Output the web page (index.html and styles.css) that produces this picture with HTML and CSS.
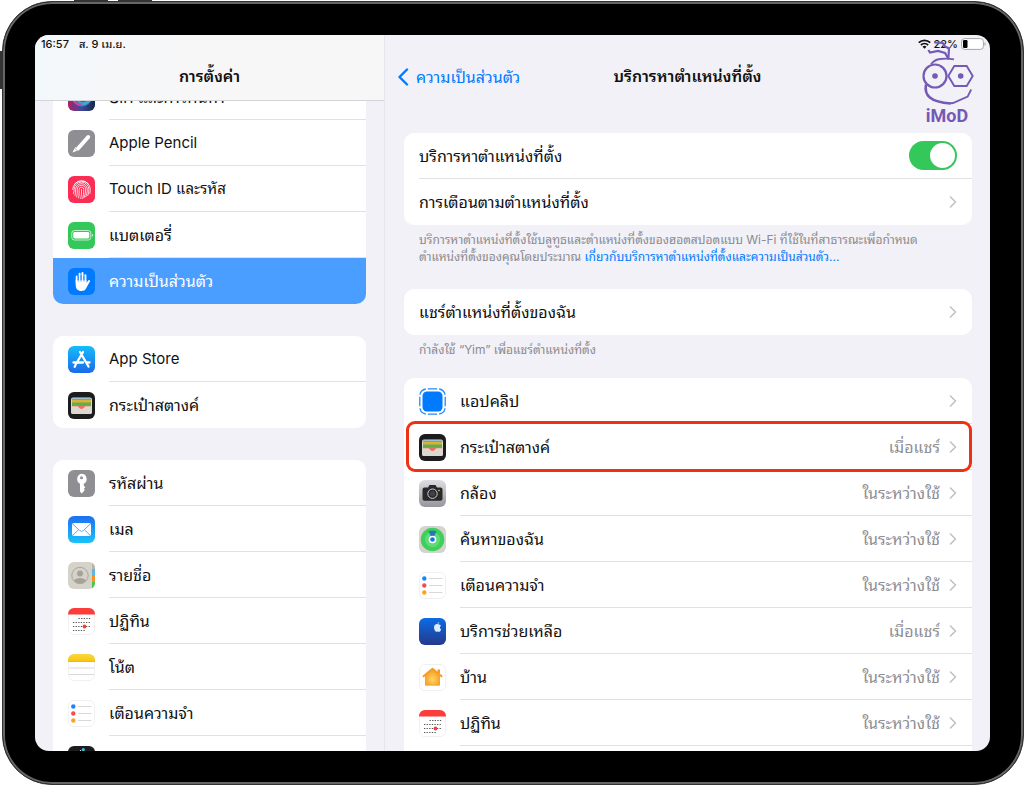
FILE: index.html
```html
<!DOCTYPE html>
<html lang="th">
<head>
  <meta charset="UTF-8" />
  <meta name="viewport" content="width=device-width, initial-scale=1" />
  <title>บริการหาตำแหน่งที่ตั้ง</title>
  <link rel="stylesheet" href="styles.css">
</head>
<body>

  <!-- shared icons -->
  <svg class="sprite" aria-hidden="true">
    <defs>
      <linearGradient id="g-store" x1="0" y1="0" x2="0" y2="1"><stop offset="0" stop-color="#15bdfb"/><stop offset="1" stop-color="#1c69ea"/></linearGradient>
      <linearGradient id="g-mail" x1="0" y1="0" x2="0" y2="1"><stop offset="0" stop-color="#1d6ff2"/><stop offset="1" stop-color="#19c3fb"/></linearGradient>
      <linearGradient id="g-notes" x1="0" y1="0" x2="0" y2="1"><stop offset="0" stop-color="#fbd743"/><stop offset="1" stop-color="#f9c60d"/></linearGradient>
      <linearGradient id="g-camera" x1="0" y1="0" x2="0" y2="1"><stop offset="0" stop-color="#dedee2"/><stop offset="1" stop-color="#95959b"/></linearGradient>
      <linearGradient id="g-support" x1="0" y1="0" x2="0" y2="1"><stop offset="0" stop-color="#0b6be6"/><stop offset="1" stop-color="#26398a"/></linearGradient>
      <radialGradient id="g-home" cx=".5" cy=".6" r=".6"><stop offset="0" stop-color="#ffd766"/><stop offset="1" stop-color="#f7981d"/></radialGradient>
      <linearGradient id="g-siri" x1="0" y1="0" x2="1" y2="0"><stop offset="0" stop-color="#b01f66"/><stop offset=".5" stop-color="#3e4a9c"/><stop offset="1" stop-color="#12284e"/></linearGradient>
      <clipPath id="tile"><rect width="27" height="27" rx="6"/></clipPath>
    </defs>

    <symbol id="siri" viewBox="0 0 27 27">
      <rect width="27" height="27" rx="6" fill="url(#g-siri)"/>
      <circle cx="14" cy="13" r="10" fill="#3565b0"/>
      <path d="M5 16c5 6 13 7 18-1M7 12c4 9 10 9 16 2" fill="none" stroke="#4aa5cc" stroke-width="1.600"/>
      <path d="M5 15c2 5 5 6 9 6" fill="none" stroke="#c9489a" stroke-width="2"/>
    </symbol>
    <symbol id="pencil" viewBox="0 0 27 27">
      <rect width="27" height="27" rx="6" fill="#8e8e93"/>
      <path d="M20.2 7 10 18.5" stroke="#fff" stroke-width="4" stroke-linecap="round"/>
      <path d="M7.300 17 4.500 22.500 11 20z" fill="#fff"/>
      <path d="m7 18.500 2.500 2.200" stroke="#8e8e93" stroke-width=".7"/>
    </symbol>
    <symbol id="touch" viewBox="0 0 27 27">
      <rect width="27" height="27" rx="6" fill="#fb2d55"/>
      <g fill="none" stroke="#fff" stroke-width=".8" stroke-linecap="round">
        <path d="M7 7.500a9.500 9.500 0 0 1 13 0M4.700 13.500a8.800 8.800 0 0 1 17.600 0c0 1.500-.2 2.800-.5 4M5.500 17.500c.4-1.300.6-2.500.6-4a7.400 7.400 0 0 1 14.800 0c0 2.300-.5 4.200-1.100 6M7 19.500c.5-1.800.7-3.800.7-6a5.800 5.800 0 0 1 11.600 0c0 3-.7 5.300-1.500 7.300M8.700 21c.5-2 .7-5 .7-7.500a4.100 4.100 0 0 1 8.200 0c0 3.500-.7 6-1.500 8M10.700 22c.4-2.300.5-5.500.5-8.500a2.300 2.300 0 0 1 4.600 0c0 3.800-.5 6.500-1.100 9M13.500 13.500c0 3.500-.1 6.500-.7 9"/>
      </g>
    </symbol>
    <symbol id="battery" viewBox="0 0 27 27">
      <rect width="27" height="27" rx="6" fill="#34c759"/>
      <rect x="3.800" y="8.500" width="19" height="9.500" rx="2.600" fill="none" stroke="#d0f2d8" stroke-width=".9"/>
      <rect x="5.300" y="10" width="16" height="6.500" rx="1.400" fill="#fff"/>
      <path d="M24 11.800v3q1-.3 1-1.500t-1-1.500z" fill="#d0f2d8"/>
    </symbol>
    <symbol id="hand" viewBox="0 0 27 27">
      <rect width="27" height="27" rx="6" fill="#007aff"/>
      <g stroke="#fff" stroke-width="2" stroke-linecap="round" fill="none"><path d="M8.700 15V8.500M11.600 14V5.800M14.500 14V5M17.400 15V7.300M17.500 18l3.500-5"/></g>
      <path d="M7.700 12h10.700v4l2.800-3.500.7.800-3.300 6.200c-1 2.400-2.500 3.500-5.200 3.500-3.700 0-5.700-2.300-5.700-6z" fill="#fff"/>
      <path d="M10.150 8v5.500M13.050 7v6.500M15.950 8v5.500" stroke="#007aff" stroke-width=".7"/>
    </symbol>
    <symbol id="store" viewBox="0 0 27 27">
      <rect width="27" height="27" rx="6" fill="url(#g-store)"/>
      <g stroke="#fff" stroke-width="2.300" stroke-linecap="round" fill="none"><path d="M15 6 8 18M12 6l8.500 14.500M5.500 16.500h9.500M18.500 16.500h3M7.300 19.500l-.6 1.200"/></g>
    </symbol>
    <symbol id="wallet" viewBox="0 0 27 27">
      <rect width="27" height="27" rx="6" fill="#1c1c1e"/>
      <rect x="3" y="5.500" width="21" height="16.500" rx="2" fill="#dcd8d0"/>
      <path d="M4 6.500h19v1.800H4z" fill="#63a6cd"/><path d="M4 8h19v3H4z" fill="#d9b13d"/><path d="M4 10.500h19v3.500H4z" fill="#63ae4b"/>
      <path d="M4 13.500h19v4H4z" fill="#ef6f61"/>
      <path d="M3 14.300h6c1.800 0 1.800 2.700 4.500 2.700s2.700-2.700 4.500-2.700h6V20a2 2 0 0 1-2 2H5a2 2 0 0 1-2-2z" fill="#dcd8d0"/>
    </symbol>
    <symbol id="key" viewBox="0 0 27 27">
      <rect width="27" height="27" rx="6" fill="#8e8e93"/>
      <path fill-rule="evenodd" d="M13.500 3.800a5.300 5.300 0 0 1 2.300 10v2l1.500 1.500-1.500 1.500 1 1.200-3 3.500-1.800-1.800v-8A5.300 5.300 0 0 1 13.500 3.800zm0 2.500a1.500 1.500 0 1 0 0 3 1.500 1.500 0 0 0 0-3z" fill="#fff"/>
    </symbol>
    <symbol id="mail" viewBox="0 0 27 27">
      <rect width="27" height="27" rx="6" fill="url(#g-mail)"/>
      <rect x="4" y="7" width="19" height="13" rx="2" fill="#fff"/>
      <path d="m4.500 7.800 7.200 6.800q1.800 1.500 3.600 0l7.200-6.800M4.700 19.400l6-5.700M22.300 19.400l-6-5.700" fill="none" stroke="#4aa3f2" stroke-width=".9"/>
    </symbol>
    <symbol id="contacts" viewBox="0 0 27 27">
      <g clip-path="url(#tile)">
        <path d="M0 0h27v27H0z" fill="#d5d2c9"/>
        <path d="M24 0h3v7h-3z" fill="#b9b6ad"/><path d="M24 7h3v7h-3z" fill="#5bb7e8"/><path d="M24 14h3v6h-3z" fill="#f79426"/><path d="M24 20h3v7h-3z" fill="#4cc24f"/>
        <circle cx="12" cy="13.500" r="8.200" fill="#d5d2c9" stroke="#a4a29b" stroke-width=".9"/>
        <circle cx="12" cy="11.500" r="3" fill="#a4a29b"/>
        <path d="M6 18.700c1.500-3.500 10.500-3.500 12 0-3 3.500-9 3.500-12 0z" fill="#a4a29b"/>
      </g>
    </symbol>
    <symbol id="calendar" viewBox="0 0 27 27">
      <rect x=".5" y=".5" width="26" height="26" rx="5.500" fill="#fff" stroke="#f0f0f2"/>
      <path d="M0 6.500V6a6 6 0 0 1 6-6h15a6 6 0 0 1 6 6v.5z" fill="#fc3d39"/>
      <g stroke="#555" stroke-width="1.100" stroke-dasharray="1.300 1.300"><path d="M10.500 10.500H23M5 14.500h18M5 18.500h18M5 22.500h12.500"/></g>
      <circle cx="16.500" cy="18.500" r="1.900" fill="#f43f3b"/>
    </symbol>
    <symbol id="notes" viewBox="0 0 27 27">
      <rect x=".5" y=".5" width="26" height="26" rx="5.500" fill="#fff" stroke="#f0f0f2"/>
      <path d="M0 7V6a6 6 0 0 1 6-6h15a6 6 0 0 1 6 6v1z" fill="url(#g-notes)"/>
      <path d="M0 7.500h27" stroke="#b9b7ae"/><path d="M1 14h25M1 20.500h25" stroke="#d8dadd"/>
    </symbol>
    <symbol id="reminders" viewBox="0 0 27 27">
      <rect x=".5" y=".5" width="26" height="26" rx="5.500" fill="#fff" stroke="#f0f0f2"/>
      <circle cx="5.300" cy="6.500" r="2.200" fill="#1b84fb"/><circle cx="5.300" cy="13.500" r="2.200" fill="#fa4a4c"/><circle cx="5.300" cy="20.500" r="2.200" fill="#f9a22a"/>
      <path d="M10 6.500h13.500M10 13.500h13.500M10 20.500h13.500" stroke="#d9d9dc"/>
    </symbol>
    <symbol id="voice" viewBox="0 0 27 27">
      <rect width="27" height="27" rx="6" fill="#1c1c1e"/>
      <path d="M9.500 6v12" stroke="#e84050"/><path d="M12.500 4v16" stroke="#d8d8d8"/><path d="M15.300 4v19" stroke="#38bde0"/><circle cx="15.300" cy="3.500" r="1.600" fill="#38bde0"/><path d="M18 8v9" stroke="#e84050"/>
    </symbol>
    <symbol id="clip" viewBox="0 0 27 27">
      <rect x="3.500" y="3.500" width="20" height="20" rx="4.500" fill="#007aff"/>
      <path d="M8.800.8h9.400M8.800 26.200h9.400M.8 8.800v9.400M26.200 8.800v9.400M1 6.800Q1.500 2 6.800 1M20.200 1Q25.500 2 26 6.800M1 20.200Q1.500 25 6.800 26M20.200 26Q25.500 25 26 20.200" fill="none" stroke="#2489fb" stroke-width="1.300"/>
    </symbol>
    <symbol id="camera" viewBox="0 0 27 27">
      <rect width="27" height="27" rx="6" fill="url(#g-camera)"/>
      <path d="M5.500 7.500H9L10.500 5h6L18 7.500h3.500a2 2 0 0 1 2 2v9.300a2 2 0 0 1-2 2h-16a2 2 0 0 1-2-2V9.500a2 2 0 0 1 2-2z" fill="#29292c"/>
      <circle cx="13.500" cy="13.700" r="4.700" fill="#29292c" stroke="#d0d0d4"/><circle cx="13.500" cy="13.700" r="2.700" fill="#414144"/><circle cx="20" cy="10.500" r=".8" fill="#e8c85a"/>
    </symbol>
    <symbol id="find" viewBox="0 0 27 27">
      <rect width="27" height="27" rx="6" fill="#d6d3cf"/>
      <circle cx="13.500" cy="13.500" r="11.800" fill="#3fcf5c"/><circle cx="13.500" cy="13.500" r="7.500" fill="#60dc76"/>
      <path d="M9.500 5.200q4-1.500 8 0l-4 8.300z" fill="#2478b8"/>
      <circle cx="13.500" cy="13.500" r="3.800" fill="#fff"/><circle cx="13.500" cy="13.500" r="2.300" fill="#1674e8"/>
    </symbol>
    <symbol id="support" viewBox="0 0 27 27">
      <rect width="27" height="27" rx="6" fill="url(#g-support)"/>
      <path d="M20.500 6.700c-1.100-.9-2.500-.8-2.500-.8s-3 .1-3 3.500c0 2 1.400 4.400 2.600 4.400.5 0 .7-.3 1.200-.3s.8.300 1.300.3c.9 0 1.800-1.600 2-2.400-1.500-.8-1.600-2.700-.1-3.600-.6-.8-1.100-1-1.500-1.100z" fill="#dcebff"/><path d="M18.500 6q0-1.700 1.700-2 .1 1.700-1.700 2z" fill="#dcebff"/>
    </symbol>
    <symbol id="home" viewBox="0 0 27 27">
      <rect x=".5" y=".5" width="26" height="26" rx="5.500" fill="#fff" stroke="#f0f0f2"/>
      <path d="M13.500 5.500 6 11.500v8.700a1.500 1.500 0 0 0 1.500 1.500h12a1.500 1.500 0 0 0 1.500-1.500v-8.700z" fill="url(#g-home)"/>
      <path d="M18.500 5.500H21V9h-2.500z" fill="#f7981d"/>
      <path d="M4.500 12.300 13.500 4.800l9 7.500" fill="none" stroke="#f79a24" stroke-width="1.900" stroke-linecap="round" stroke-linejoin="round"/>
    </symbol>
    <symbol id="chevron" viewBox="0 0 8 12">
      <path d="m1.500 1 5 5-5 5" fill="none" stroke="#c2c2c6" stroke-width="1.600" stroke-linecap="round" stroke-linejoin="round"/>
    </symbol>
  </svg>

  <div class="device">
    <span class="hw hw-top-1"></span>
    <span class="hw hw-top-2"></span>
    <span class="hw hw-side"></span>

    <div class="screen">
      <aside class="sidebar">
        <header class="sidebar-head">
          <div class="status"><span>16:57</span><span>ส. 9 เม.ย.</span></div>
          <h2 class="title">การตั้งค่า</h2>
        </header>
        <nav class="menu">
          <div class="card card-scrolled">
            <a class="row" href="#"><svg class="icon"><use href="#siri"/></svg><span class="cell">Siri และการค้นหา</span></a>
            <a class="row" href="#"><svg class="icon"><use href="#pencil"/></svg><span class="cell latin">Apple Pencil</span></a>
            <a class="row" href="#"><svg class="icon"><use href="#touch"/></svg><span class="cell latin">Touch ID และรหัส</span></a>
            <a class="row" href="#"><svg class="icon"><use href="#battery"/></svg><span class="cell">แบตเตอรี่</span></a>
            <a class="row selected" href="#"><svg class="icon"><use href="#hand"/></svg><span class="cell">ความเป็นส่วนตัว</span></a>
          </div>
          <div class="card">
            <a class="row" href="#"><svg class="icon"><use href="#store"/></svg><span class="cell latin">App Store</span></a>
            <a class="row" href="#"><svg class="icon"><use href="#wallet"/></svg><span class="cell">กระเป๋าสตางค์</span></a>
          </div>
          <div class="card">
            <a class="row" href="#"><svg class="icon"><use href="#key"/></svg><span class="cell">รหัสผ่าน</span></a>
            <a class="row" href="#"><svg class="icon"><use href="#mail"/></svg><span class="cell">เมล</span></a>
            <a class="row" href="#"><svg class="icon"><use href="#contacts"/></svg><span class="cell">รายชื่อ</span></a>
            <a class="row" href="#"><svg class="icon"><use href="#calendar"/></svg><span class="cell">ปฏิทิน</span></a>
            <a class="row" href="#"><svg class="icon"><use href="#notes"/></svg><span class="cell">โน้ต</span></a>
            <a class="row" href="#"><svg class="icon"><use href="#reminders"/></svg><span class="cell">เตือนความจำ</span></a>
            <a class="row" href="#"><svg class="icon"><use href="#voice"/></svg><span class="cell">เสียงบันทึก</span></a>
          </div>
        </nav>
      </aside>

      <main class="detail">
        <div class="status status-right">
          <svg class="wifi" viewBox="0 0 13 10"><g fill="none" stroke="#111" stroke-width="1.800"><path d="M.8 3.700a8.200 8.200 0 0 1 11.400 0M2.900 6a5.200 5.200 0 0 1 7.200 0"/></g><path d="M4.500 7.700a2.900 2.900 0 0 1 4 0l-2 2z" fill="#111"/></svg>
          <span>22%</span>
          <svg class="power" viewBox="0 0 25 12"><rect x=".6" y=".6" width="21.800" height="10.800" rx="3" fill="#fff" stroke="#a5a5a9"/><rect x="2" y="2" width="4.500" height="8" rx="1.200" fill="#000"/><path d="M23.500 4v4q1.200-.5 1.200-2t-1.200-2z" fill="#a5a5a9"/></svg>
        </div>
        <header class="nav">
          <a class="back" href="#"><svg class="back-arrow" viewBox="0 0 12 18"><path d="M10 1.500 2.500 9l7.500 7.500" fill="none" stroke="#007aff" stroke-width="2.400" stroke-linecap="round" stroke-linejoin="round"/></svg>ความเป็นส่วนตัว</a>
          <h1 class="title">บริการหาตำแหน่งที่ตั้ง</h1>
        </header>

        <div class="content">
          <div class="card">
            <div class="row"><div class="cell"><label for="location">บริการหาตำแหน่งที่ตั้ง</label><input class="switch" type="checkbox" id="location" checked></div></div>
            <a class="row" href="#"><span class="cell">การเตือนตามตำแหน่งที่ตั้ง<svg class="chevron"><use href="#chevron"/></svg></span></a>
          </div>
          <p class="note">บริการหาตำแหน่งที่ตั้งใช้บลูทูธและตำแหน่งที่ตั้งของฮอตสปอตแบบ Wi-Fi ที่ใช้ในที่สาธารณะเพื่อกำหนด<br>ตำแหน่งที่ตั้งของคุณโดยประมาณ <a href="#">เกี่ยวกับบริการหาตำแหน่งที่ตั้งและความเป็นส่วนตัว...</a></p>

          <div class="card">
            <a class="row" href="#"><span class="cell">แชร์ตำแหน่งที่ตั้งของฉัน<svg class="chevron"><use href="#chevron"/></svg></span></a>
          </div>
          <p class="note note-short">กำลังใช้ “Yim” เพื่อแชร์ตำแหน่งที่ตั้ง</p>

          <div class="card">
            <a class="row" href="#"><svg class="icon"><use href="#clip"/></svg><span class="cell">แอปคลิป<svg class="chevron"><use href="#chevron"/></svg></span></a>
            <a class="row marked" href="#"><svg class="icon"><use href="#wallet"/></svg><span class="cell">กระเป๋าสตางค์<span class="value">เมื่อแชร์</span><svg class="chevron"><use href="#chevron"/></svg></span></a>
            <a class="row" href="#"><svg class="icon"><use href="#camera"/></svg><span class="cell">กล้อง<span class="value">ในระหว่างใช้</span><svg class="chevron"><use href="#chevron"/></svg></span></a>
            <a class="row" href="#"><svg class="icon"><use href="#find"/></svg><span class="cell">ค้นหาของฉัน<span class="value">ในระหว่างใช้</span><svg class="chevron"><use href="#chevron"/></svg></span></a>
            <a class="row" href="#"><svg class="icon"><use href="#reminders"/></svg><span class="cell">เตือนความจำ<span class="value">ในระหว่างใช้</span><svg class="chevron"><use href="#chevron"/></svg></span></a>
            <a class="row" href="#"><svg class="icon"><use href="#support"/></svg><span class="cell">บริการช่วยเหลือ<span class="value">เมื่อแชร์</span><svg class="chevron"><use href="#chevron"/></svg></span></a>
            <a class="row" href="#"><svg class="icon"><use href="#home"/></svg><span class="cell">บ้าน<span class="value">ในระหว่างใช้</span><svg class="chevron"><use href="#chevron"/></svg></span></a>
            <a class="row" href="#"><svg class="icon"><use href="#calendar"/></svg><span class="cell">ปฏิทิน<span class="value">ในระหว่างใช้</span><svg class="chevron"><use href="#chevron"/></svg></span></a>
            <div class="row"></div>
          </div>
        </div>

        <div class="watermark">
          <svg class="watermark-face" viewBox="0 0 54 66" fill="none" stroke="#7459b5">
            <path d="M8.300 9 10 11.500l8-1.500 7 2 3.300 5.500" stroke-width="2.200"/>
            <path d="m14.300 1.500 8.400.5 2.300 3.500 4 2-.7 11" stroke-width="2.200"/>
            <path d="M11 23q4-4.500 9-5 7-1 14 .3" stroke-width="1.800"/>
            <circle cx="15" cy="35" r="11.500" stroke-width="2.200"/>
            <path d="M28.300 35 34.300 25h12.400l6 10-6 10H34.300z" stroke-width="1.900"/>
            <circle cx="15" cy="35" r="2.800" fill="#7459b5" stroke="none"/>
            <circle cx="40.700" cy="35" r="2.800" fill="#7459b5" stroke="none"/>
            <path d="M6 43.500c-2 11 4 17.500 24.700 19" stroke-width="2.600"/>
            <path d="m29 62.300 4-.3 14.700-6.500 3.500-7" stroke-width="1.800"/>
          </svg>
          <span>iMoD</span>
        </div>
      </main>
    </div>
  </div>

</body>
</html>
```
FILE: styles.css
```css
* {
  box-sizing: border-box;
}

body {
  margin: 0;
  background: #fff;
  color: #111;
  font-family: Inter, "Noto Sans Thai Looped", "Noto Sans Thai", "Open Sans", sans-serif;
  font-size: 16px;
  line-height: 20px;
}

a {
  color: inherit;
  text-decoration: none;
}

.sprite {
  position: absolute;
  width: 0;
  height: 0;
}

/* device frame */
.device {
  position: relative;
  height: calc(100vh - 1px);
  margin: 1px 0 0 2px;
  padding: 33px 33px 33px 32px;
  background: #000;
  border: 1px solid #333;
  border-radius: 50px;
  box-shadow: inset 0 0 0 2px #666;
}

.hw {
  position: absolute;
  background: #333;
}

.hw-top-1,
.hw-top-2 {
  top: -2px;
  width: 34px;
  height: 2px;
}

.hw-top-1 {
  left: 71px;
}

.hw-top-2 {
  left: 115px;
}

.hw-side {
  top: 49px;
  left: -3px;
  width: 2px;
  height: 38px;
}

.screen {
  display: grid;
  grid-template-columns: 350px 1fr;
  height: 100%;
  overflow: hidden;
  background: #f2f1f7;
  border-radius: 14px;
}

.status {
  display: flex;
  align-items: center;
  gap: 10px;
  height: 18px;
  padding: 0 6px;
  font-size: 11px;
  line-height: 18px;
  font-weight: 500;
}

.title {
  margin: 0;
  font-size: 16px;
  line-height: 47px;
  font-weight: 600;
  text-align: center;
}

/* sidebar */
.sidebar {
  display: flex;
  flex-direction: column;
  min-height: 0;
  border-right: 1px solid #e6e5eb;
}

.sidebar-head {
  position: relative;
  z-index: 1;
  flex: none;
  background: linear-gradient(100deg, #f3f8fa 0, #f7f7f8 40%);
  border-bottom: 1px solid #d4d4d8;
}

.menu {
  display: flex;
  flex-direction: column;
  gap: 32px;
  min-height: 0;
  padding: 0 18px;
  overflow: hidden;
}

.card {
  flex: none;
  background: #fff;
  border-radius: 10px;
}

.card-scrolled {
  margin-top: -27px;
}

.row {
  position: relative;
  display: flex;
  align-items: center;
  gap: 14px;
  height: 46px;
  padding-left: 15px;
}

.cell {
  display: flex;
  flex: 1;
  align-items: center;
  height: 46px;
  border-bottom: 1px solid #e1e1e4;
}

.row:last-child .cell {
  border-bottom: 0;
}

.latin {
  font-size: 15px;
}

.icon {
  flex: none;
  width: 27px;
  height: 27px;
}

.selected {
  color: #fff;
  background: #4a9eff;
  border-radius: 0 0 10px 10px;
}

/* detail pane */
.detail {
  position: relative;
  min-width: 0;
  min-height: 0;
  overflow: hidden;
}

.status-right {
  justify-content: flex-end;
  gap: 3px;
  padding-right: 4px;
}

.wifi {
  width: 13px;
  height: 10px;
}

.power {
  width: 25px;
  height: 12px;
}

.nav {
  display: grid;
  grid-template-columns: 1fr auto 1fr;
  align-items: center;
}

.back {
  display: flex;
  align-items: center;
  gap: 7px;
  padding-left: 12px;
  color: #007aff;
}

.back-arrow {
  width: 12px;
  height: 18px;
}

.content {
  padding: 33px 18px 0 19px;
}

.chevron {
  width: 8px;
  height: 12px;
  margin: 0 15px 0 auto;
}

.value {
  margin-left: auto;
  color: #8e8e93;
}

.value + .chevron {
  margin-left: 9px;
}

.note {
  margin: 0;
  padding: 6px 15px 24px;
  color: #8a8a8f;
  font-size: 12px;
  line-height: 17px;
}

.note-short {
  padding-bottom: 20px;
}

.note a {
  color: #007aff;
}

.switch {
  flex: none;
  width: 48px;
  height: 29px;
  margin: 0 15px 0 auto;
  padding: 2px;
  appearance: none;
  background: #e2e2e5;
  border-radius: 15px;
}

.switch::before {
  content: "";
  display: block;
  width: 25px;
  height: 25px;
  background: #fff;
  border-radius: 50%;
}

.switch:checked {
  background: #34c759;
}

.switch:checked::before {
  margin-left: auto;
}

/* highlighted row */
.marked::after {
  content: "";
  position: absolute;
  inset: -3px 0 -2px 2px;
  border: 3px solid #ee3113;
  border-radius: 9px;
}

.watermark {
  position: absolute;
  top: 6px;
  right: 16px;
  display: flex;
  flex-direction: column;
  align-items: center;
  color: #7459b5;
  font-family: Roboto, sans-serif;
  font-size: 18px;
  line-height: 18px;
  font-weight: 700;
}

.watermark-face {
  width: 54px;
  height: 66px;
}
```
